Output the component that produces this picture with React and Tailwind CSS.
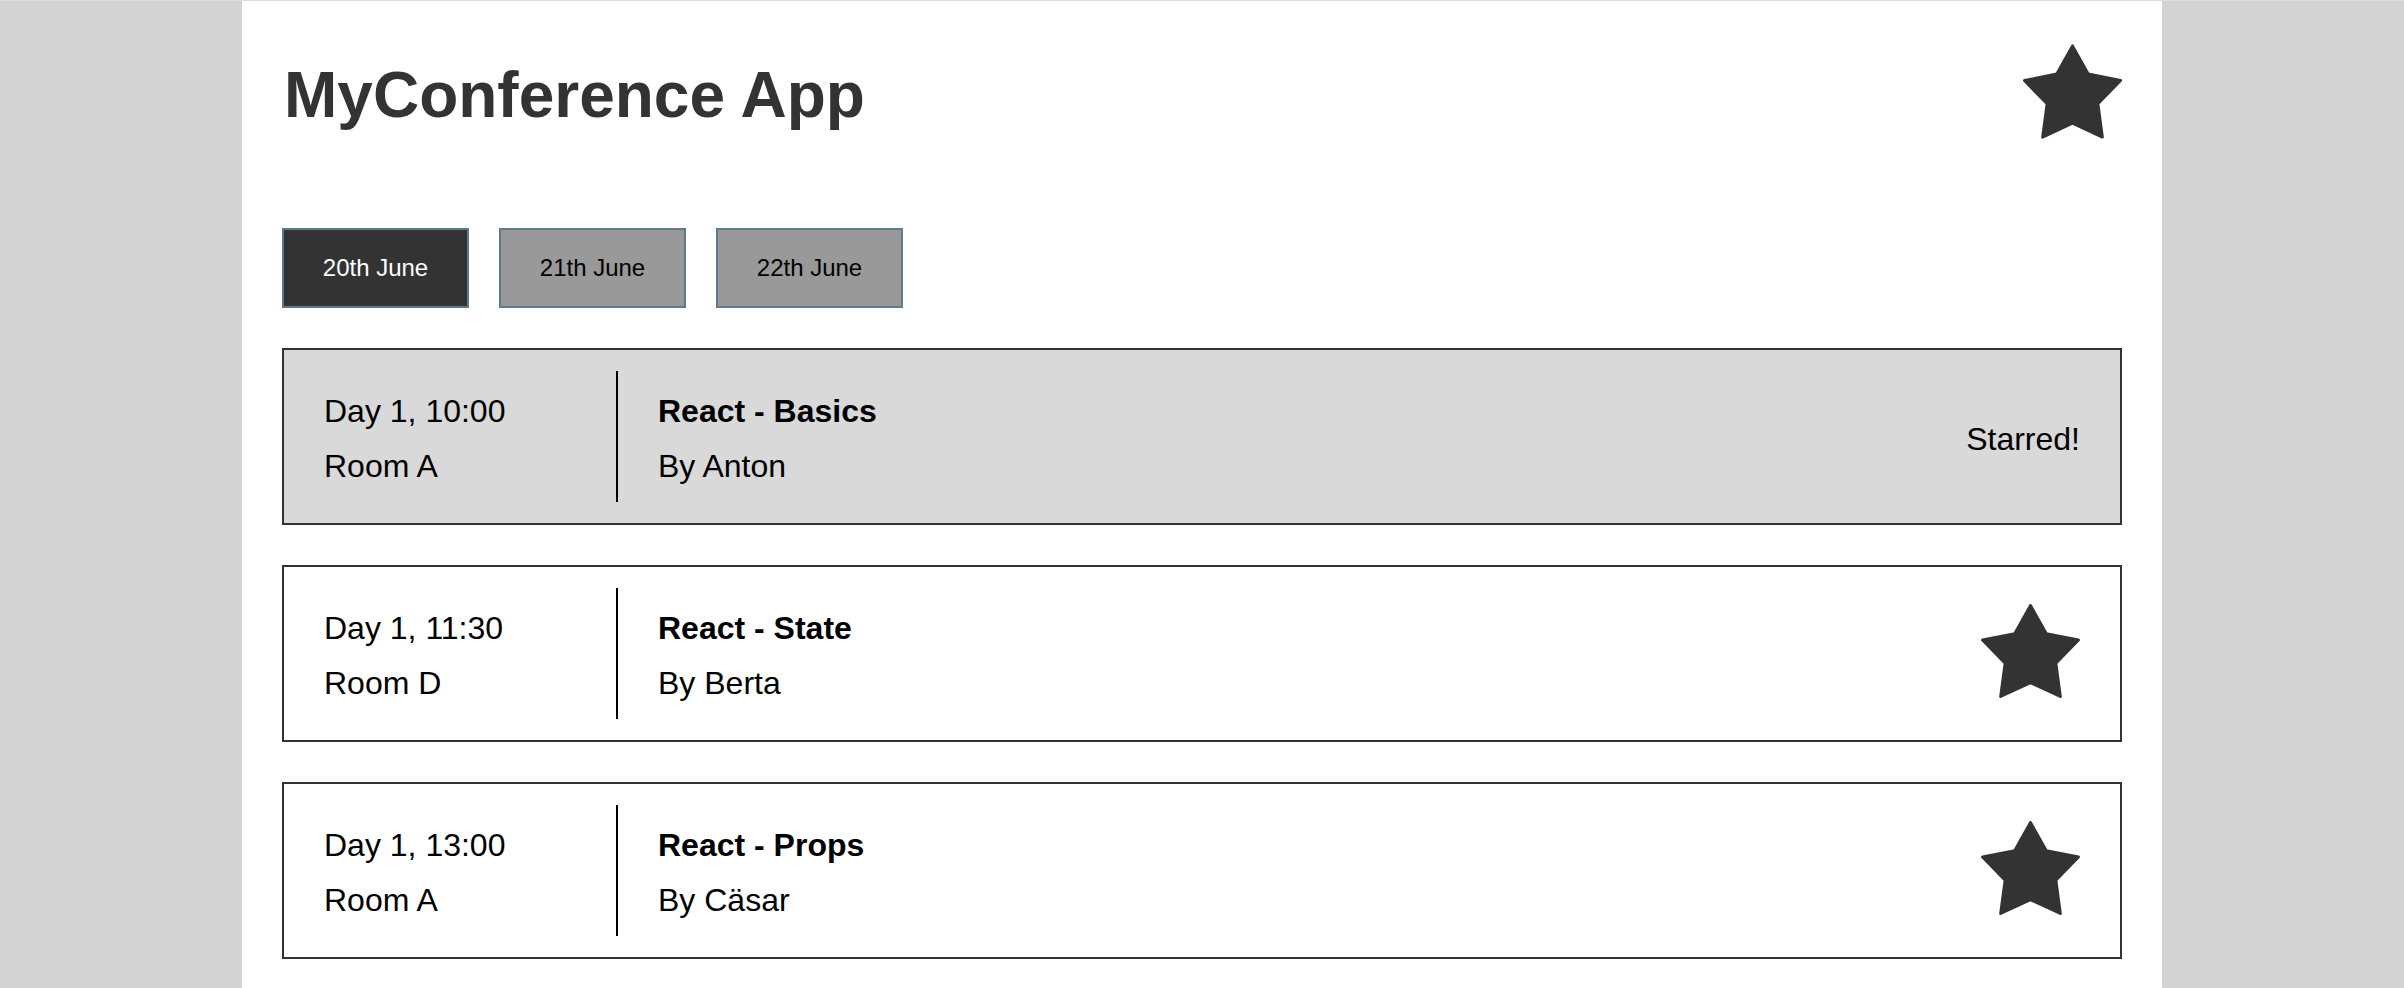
import React, { useState } from "react";

const sessions = [
    { id: 1, time: "Day 1, 10:00", room: "Room A", title: "React - Basics", speaker: "By Anton", starred: true },
    { id: 2, time: "Day 1, 11:30", room: "Room D", title: "React - State", speaker: "By Berta", starred: false },
    { id: 3, time: "Day 1, 13:00", room: "Room A", title: "React - Props", speaker: "By Cäsar", starred: false },
];

const days = ["20th June", "21th June", "22th June"];

const Star = ({ className }) => (
    <svg viewBox="-1.5 -1.5 102 97" className={className} aria-hidden="true">
        <polygon
            points="49.5,0 65.7,29 99,35.7 75.7,59.7 80.3,94 49.5,79.7 18.7,94 23.3,59.7 0,35.7 33.3,29"
            fill="#333333"
            stroke="#333333"
            strokeWidth="3"
            strokeLinejoin="round"
        />
    </svg>
);

const SessionRow = ({ session, onStar }) => {
    return (
        <div className={`h-[177px] flex flex-row items-stretch border-2 border-[#333333] px-[40px] py-[21px] ${session.starred ? "bg-[#d9d9d9]" : "bg-white"}`}>
            <div className="w-[294px] shrink-0 flex flex-col justify-center pt-1 border-r-2 border-black text-[32px] leading-[55px] text-black">
                <div>{session.time}</div>
                <div>{session.room}</div>
            </div>
            <div className="flex-1 flex flex-col justify-center pt-1 pl-[40px] text-[32px] leading-[55px] text-black">
                <div className="font-bold">{session.title}</div>
                <div>{session.speaker}</div>
            </div>
            <div className="flex items-center">
                {session.starred ? (
                    <span className="pt-[5px] text-[32px] text-black">Starred!</span>
                ) : (
                    <button onClick={() => onStar(session.id)} className="flex items-center">
                        <Star className="w-[99px] h-[94px] -mt-[6px]" />
                    </button>
                )}
            </div>
        </div>
    );
};

export default function App() {
    const [active, setActive] = useState(0);
    const [list, setList] = useState(sessions);

    const onStar = (id) => {
        setList(list.map((s) => (s.id === id ? { ...s, starred: true } : s)));
    };

    return (
        <div className="min-h-screen bg-[#d3d3d3] border-t border-[#dcdcdc] font-['Liberation_Sans',Arial,sans-serif]">
            <div className="mx-auto w-[1920px] min-h-screen bg-white px-[40px] pb-10">
                <div className="flex flex-row justify-between items-start pt-[43px]">
                    <h1 className="mt-[14px] ml-[2px] text-[64px] leading-[74px] font-bold text-[#333333]">
                        MyConference App
                    </h1>
                    <Star className="w-[99px] h-[95px]" />
                </div>

                <div className="flex flex-row gap-[30px] mt-[89px]">
                    {days.map((day, i) => (
                        <button
                            key={day}
                            onClick={() => setActive(i)}
                            className={`w-[187px] h-[80px] border-2 border-[#5f7a8a] text-[24px] ${active === i ? "bg-[#333333] text-white" : "bg-[#999999] text-black"}`}
                        >
                            {day}
                        </button>
                    ))}
                </div>

                <div className="flex flex-col gap-[40px] mt-[40px]">
                    {list.map((s) => (
                        <SessionRow key={s.id} session={s} onStar={onStar} />
                    ))}
                </div>
            </div>
        </div>
    );
}
